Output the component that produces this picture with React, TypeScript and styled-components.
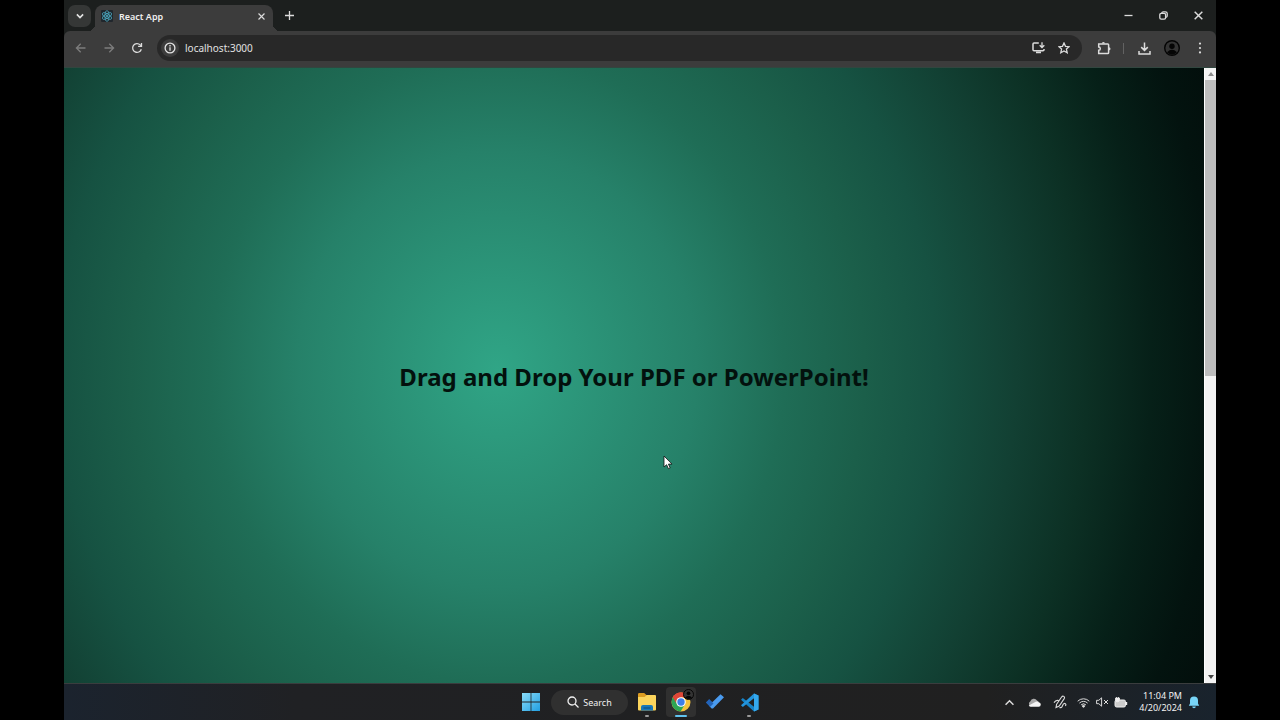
import React from 'react';
import styled, { createGlobalStyle } from 'styled-components';

const GlobalStyle = createGlobalStyle`
  * { box-sizing: border-box; }
  body { margin: 0; background: #000; font-family: "Noto Sans", "Open Sans", sans-serif; }
  button { font: inherit; color: inherit; border: 0; padding: 0; background: none; }
  h1 { margin: 0; }
  svg { display: block; flex: none; }
`;

const Screen = styled.div`
  width: 90%;
  height: 100vh;
  margin: 0 auto;
  display: flex;
  flex-direction: column;
  color: #e3e3e3;
  background: #1c1f1e;
  overflow: hidden;
`;

const TabStrip = styled.header`
  display: flex;
  align-items: stretch;
  height: 31px;
  flex: none;
  padding-left: 4px;
`;

const TabSearch = styled.button`
  display: grid;
  place-items: center;
  width: 23px;
  height: 22px;
  margin: 5px 4px 0 0;
  border-radius: 7px;
  background: #353736;
`;

const Tab = styled.div`
  position: relative;
  display: flex;
  align-items: center;
  gap: 6px;
  width: 178px;
  margin-top: 5px;
  padding: 0 6px 4px;
  border-radius: 8px 8px 0 0;
  background: #3c3c3c;
  font-size: 9px;
  font-weight: 600;
  color: #efefef;
  &::before, &::after {
    content: "";
    position: absolute;
    bottom: 0;
    width: 7px;
    height: 7px;
  }
  &::before { right: 100%; background: radial-gradient(circle at 0 0, transparent 7px, #3c3c3c 7px); }
  &::after { left: 100%; background: radial-gradient(circle at 100% 0, transparent 7px, #3c3c3c 7px); }
`;

const TabTitle = styled.span`flex: 1;`;

const IconButton = styled.button<{ $w?: number; $dim?: boolean }>`
  display: grid;
  place-items: center;
  width: ${(p) => p.$w ?? 16}px;
  height: 100%;
  flex: none;
  color: ${(p) => (p.$dim ? '#7c7c7c' : '#dcdcdc')};
`;

const WindowControls = styled.div`
  display: flex;
  margin-left: auto;
`;

const Toolbar = styled.nav`
  display: flex;
  align-items: center;
  height: 36px;
  flex: none;
  padding: 0 3px 2px;
  border-radius: 6px 6px 0 0;
  background: #3c3c3c;
`;

const AddressBar = styled.form`
  display: flex;
  align-items: center;
  flex: 1;
  height: 26px;
  margin: 0 8px 0 6px;
  padding: 0 6px 0 4px;
  border-radius: 13px;
  background: #282828;
`;

const SiteInfo = styled.button`
  display: grid;
  place-items: center;
  width: 18px;
  height: 18px;
  border-radius: 50%;
  background: #3c3c3c;
`;

const Address = styled.input`
  flex: 1;
  min-width: 0;
  height: 20px;
  margin-left: 6px;
  padding: 0;
  border: 0;
  outline: 0;
  background: none;
  color: #e0e0e0;
  font: 10px "Noto Sans", sans-serif;
`;

const Divider = styled.span`
  width: 1px;
  height: 11px;
  margin: 0 7px 0 5px;
  background: #626262;
`;

const Viewport = styled.div`
  display: flex;
  flex: 1;
  min-height: 0;
  border-top: 1px solid #31463f;
`;

const Page = styled.main`
  flex: 1;
  display: grid;
  place-items: center;
  padding-top: 2px;
  background: radial-gradient(70% 142% at 38% 49%, #30a586 0, #268169 25%, #1f6d56 36%, #1b5f4a 46%, #165242 55%, #124033 65%, #0c3024 74%, #062018 82%, #03130f 90%, #020b09 100%);
`;

const Headline = styled.h1`
  font: bold 24px/34px "Noto Sans", sans-serif;
  color: #03110d;
  text-align: center;
`;

const Scrollbar = styled.div`
  display: flex;
  flex-direction: column;
  align-items: center;
  width: 12px;
  background: #f3f3f3;
  border-left: 1px solid #fff;
`;

const ScrollArrow = styled.button`
  display: grid;
  place-items: center;
  width: 100%;
  height: 12px;
  color: #555;
`;

const ScrollTrack = styled.div`
  flex: 1;
  width: 100%;
`;

const ScrollThumb = styled.div`
  height: 50%;
  background: #bdbdbd;
`;

const Taskbar = styled.footer`
  display: grid;
  grid-template-columns: 1fr auto 1fr;
  height: 37px;
  flex: none;
  border-top: 1px solid #3a3d3e;
  background: linear-gradient(90deg, #1b232e 0, #202124 20%, #202020 80%, #19232d 100%);
`;

const Apps = styled.div`
  grid-column: 2;
  display: flex;
  align-items: center;
  gap: 4px;
`;

const AppButton = styled.button<{ $active?: boolean }>`
  position: relative;
  display: grid;
  place-items: center;
  width: 30px;
  height: 30px;
  border-radius: 4px;
  background: ${(p) => (p.$active ? '#303030' : 'none')};
`;

const Running = styled.span<{ $active?: boolean }>`
  position: absolute;
  bottom: 0;
  width: ${(p) => (p.$active ? 12 : 4)}px;
  height: 2px;
  border-radius: 1px;
  background: ${(p) => (p.$active ? '#61c3f0' : '#9a9a9a')};
`;

const SearchButton = styled.button`
  display: flex;
  align-items: center;
  justify-content: center;
  gap: 4px;
  width: 77px;
  height: 25px;
  margin-left: 1px;
  border-radius: 13px;
  background: #303030;
  font-size: 9px;
  color: #f0f0f0;
`;

const Tray = styled.div`
  display: flex;
  align-items: center;
  justify-content: flex-end;
  padding-right: 16px;
`;

const Clock = styled.time`
  margin: 0 6px 0 7px;
  text-align: right;
  font-size: 9px;
  line-height: 12px;
  color: #f2f2f2;
`;

const Cursor = styled.svg`
  position: fixed;
  left: 663px;
  top: 455px;
`;

const stroke = { fill: 'none', stroke: 'currentColor', strokeWidth: 1.3 } as const;

const Chevron = ({ up = false, size = 10 }: { up?: boolean; size?: number }) => (
  <svg width={size} height={size} viewBox="0 0 8 8" {...stroke}><path d={up ? 'M0.5 6 4 2.5 7.5 6' : 'M1.5 2.7 4 5.2 6.5 2.7'} /></svg>
);

const ReactLogo = () => (
  <svg width="12" height="12" viewBox="0 0 12 12">
    <rect width="12" height="12" rx="1" fill="#20262c" />
    <g fill="none" stroke="#4fb6cf" strokeWidth="0.7">
      {[30, 90, 150].map((a) => <ellipse key={a} cx="6" cy="6" rx="5.3" ry="2.1" transform={`rotate(${a} 6 6)`} />)}
    </g>
    <circle cx="6" cy="6" r="1" fill="#4fb6cf" />
  </svg>
);

const Cross = ({ size = 7 }: { size?: number }) => (
  <svg width={size} height={size} viewBox="0 0 8 8" {...stroke}><path d="M.6.6 7.4 7.4M7.4.6.6 7.4" /></svg>
);

const Arrow = ({ right = false }: { right?: boolean }) => (
  <svg width="12" height="12" viewBox="0 0 12 12" {...stroke}>
    <path d={right ? 'M1.5 6h9M6.3 1.7 10.6 6 6.3 10.3' : 'M10.5 6h-9M5.7 1.7 1.4 6l4.3 4.3'} />
  </svg>
);

const ChromeLogo = () => (
  <svg width="20" height="20" viewBox="0 0 20 20">
    <circle cx="10" cy="10" r="9.5" fill="#f5c33b" />
    <path d="M10 10 1.8 5.2A9.5 9.5 0 0 1 18.2 5.3L10 5.3Z" fill="#df4638" />
    <path d="M10 10 1.8 5.2A9.5 9.5 0 0 0 9.6 19.5L14 12.3Z" fill="#2da654" />
    <path d="M1.8 5.2A9.5 9.5 0 0 1 18.2 5.3H10A4.7 4.7 0 0 0 5.9 12.3Z" fill="#df4638" />
    <circle cx="10" cy="10" r="4.8" fill="#fff" />
    <circle cx="10" cy="10" r="3.7" fill="#3d7fe8" />
  </svg>
);

const ProfileBadge = styled.svg`
  position: absolute;
  top: 2px;
  right: 2px;
`;

const Person = () => (
  <>
    <circle cx="8" cy="8" r="7.3" fill="#343434" stroke="#050505" strokeWidth="1.4" />
    <circle cx="8" cy="6.2" r="2.7" fill="#050505" />
    <path d="M3 12.2Q8 7.4 13 12.2 8 17 3 12.2" fill="#050505" />
  </>
);

export default function App() {
  return (
    <Screen>
      <GlobalStyle />
      <TabStrip>
        <TabSearch aria-label="Search tabs"><Chevron /></TabSearch>
        <Tab>
          <ReactLogo />
          <TabTitle>React App</TabTitle>
          <IconButton aria-label="Close tab" $w={12}><Cross /></IconButton>
        </Tab>
        <IconButton aria-label="New tab" $w={32}>
          <svg width="9" height="9" viewBox="0 0 9 9" {...stroke}><path d="M4.5 0v9M0 4.5h9" /></svg>
        </IconButton>
        <WindowControls>
          <IconButton aria-label="Minimize" $w={35}>
            <svg width="9" height="9" viewBox="0 0 9 9" {...stroke}><path d="M.5 4.5h8" /></svg>
          </IconButton>
          <IconButton aria-label="Restore" $w={35}>
            <svg width="9" height="9" viewBox="0 0 9 9" {...stroke}>
              <rect x="0.8" y="2.4" width="5.8" height="5.8" rx="1.4" /><path d="M2.6 1.9Q3 .8 4.2.8h2.2Q8.2.8 8.2 2.6v2.2Q8.2 6 7.2 6.4" />
            </svg>
          </IconButton>
          <IconButton aria-label="Close" $w={35}><Cross size={9} /></IconButton>
        </WindowControls>
      </TabStrip>

      <Toolbar>
        <IconButton aria-label="Back" $w={28} $dim><Arrow /></IconButton>
        <IconButton aria-label="Forward" $w={28} $dim><Arrow right /></IconButton>
        <IconButton aria-label="Reload" $w={28}>
          <svg width="12" height="12" viewBox="0 0 12 12" {...stroke}>
            <path d="M10.3 7.2A4.4 4.4 0 1 1 9.2 2.9L10.3 4" /><path d="M10.5 1v3.4H7.1" />
          </svg>
        </IconButton>
        <AddressBar>
          <SiteInfo type="button" aria-label="Site information">
            <svg width="12" height="12" viewBox="0 0 12 12" {...stroke}>
              <circle cx="6" cy="6" r="4.9" /><path d="M6 5.3v3.4M6 3.1v1.3" />
            </svg>
          </SiteInfo>
          <Address aria-label="Address" defaultValue="localhost:3000" />
          <IconButton type="button" aria-label="Install app" $w={25}>
            <svg width="13" height="12" viewBox="0 0 13 12" {...stroke}>
              <path d="M6.8 1H2Q1 1 1 2v5.7q0 1 1 1h9q1 0 1-1V7M4 10.5h5" strokeWidth="1.5" /><path d="M10 .3v5M7.7 3.2 10 5.5l2.3-2.3" />
            </svg>
          </IconButton>
          <IconButton type="button" aria-label="Bookmark" $w={25}>
            <svg width="12" height="12" viewBox="0 0 12 12" {...stroke}>
              <path d="m6 1 1.5 3.3 3.6.4-2.7 2.4.8 3.6L6 8.9l-3.2 1.8.8-3.6L.9 4.7l3.6-.4Z" />
            </svg>
          </IconButton>
        </AddressBar>
        <IconButton aria-label="Extensions" $w={28}>
          <svg width="14" height="14" viewBox="0 0 14 14" {...stroke} strokeWidth={1.5}>
            <path d="M1.7 2.9h9.1q.8 0 .8.8v8q0 .8-.8.8H1.7V9.3a1.6 1.6 0 0 0 0-3.2Z" />
            <path d="M4.8 2.6a1.6 1.6 0 0 1 3.2 0ZM12 6.2a1.5 1.5 0 0 1 0 3Z" fill="currentColor" stroke="none" />
          </svg>
        </IconButton>
        <Divider />
        <IconButton aria-label="Downloads" $w={26}>
          <svg width="13" height="13" viewBox="0 0 13 13" {...stroke} strokeWidth={1.5}>
            <path d="M6.5.5v7.7M3.2 5.1l3.3 3.3 3.3-3.3M1 9v3h11V9" />
          </svg>
        </IconButton>
        <IconButton aria-label="Profile" $w={30}>
          <svg width="16" height="16" viewBox="0 0 16 16"><Person /></svg>
        </IconButton>
        <IconButton aria-label="Menu" $w={26}>
          <svg width="4" height="12" viewBox="0 0 4 12" fill="currentColor">
            <circle cx="2" cy="1.6" r="1.1" /><circle cx="2" cy="6" r="1.1" /><circle cx="2" cy="10.4" r="1.1" />
          </svg>
        </IconButton>
      </Toolbar>

      <Viewport>
        <Page><Headline>Drag and Drop Your PDF or PowerPoint!</Headline></Page>
        <Scrollbar>
          <ScrollArrow aria-label="Scroll up"><svg width="6" height="4" viewBox="0 0 6 4"><path d="M0 4 3 0l3 4Z" fill="#8b8b8b" /></svg></ScrollArrow>
          <ScrollTrack><ScrollThumb /></ScrollTrack>
          <ScrollArrow aria-label="Scroll down"><svg width="6" height="4" viewBox="0 0 6 4"><path d="M0 0 3 4l3-4Z" fill="#444" /></svg></ScrollArrow>
        </Scrollbar>
      </Viewport>

      <Taskbar>
        <Apps>
          <AppButton aria-label="Start">
            <svg width="18" height="18" viewBox="0 0 18 18">
              <defs><linearGradient id="win" x2="1" y2="1"><stop stopColor="#8adcf8" /><stop offset="1" stopColor="#219fe2" /></linearGradient></defs>
              <path d="M0 0h8.6v8.6H0ZM9.4 0H18v8.6H9.4ZM0 9.4h8.6V18H0ZM9.4 9.4H18V18H9.4Z" fill="url(#win)" />
            </svg>
          </AppButton>
          <SearchButton>
            <svg width="12" height="12" viewBox="0 0 12 12" {...stroke}><circle cx="5" cy="5" r="4" /><path d="m8 8 3.5 3.5" /></svg>
            Search
          </SearchButton>
          <AppButton aria-label="File Explorer">
            <svg width="20" height="18" viewBox="0 0 20 18">
              <path d="M1 1.2Q1 0 2.2 0h5l2.2 2H10v4H1Z" fill="#dc9c22" />
              <path d="M1 4h6.6l2.3-2H18q1 0 1 1v13.5q0 1-1 1H2q-1 0-1-1Z" fill="#fbd45c" />
              <path d="M4 17.5V14q0-2 2-2h8q2 0 2 2v3.5Z" fill="#1877b8" /><path d="M6.5 15h7" stroke="#0d4f86" strokeWidth="1.2" />
            </svg>
            <Running />
          </AppButton>
          <AppButton aria-label="Chrome" $active>
            <ChromeLogo />
            <ProfileBadge width="11" height="11" viewBox="0 0 16 16"><Person /></ProfileBadge>
            <Running $active />
          </AppButton>
          <AppButton aria-label="To Do">
            <svg width="20" height="18" viewBox="0 0 20 18">
              <path d="m1 9.5 3.2-3.2 5.8 5.8-3.2 3.4Z" fill="#2263b8" /><path d="M6.8 15.5 3.9 12.5 15.5 1.2 19 4.3 8 15.5Z" fill="#4a9bef" />
              <path d="m1 9.5 3.2-3.2 4.3 4.2-3.3 3.3Z" fill="#2263b8" />
            </svg>
          </AppButton>
          <AppButton aria-label="Visual Studio Code">
            <svg width="19" height="19" viewBox="0 0 19 19">
              <path d="M14 .5 18.5 2.6v13.8L14 18.5 1 6.8l1.8-1.7L14 13.7Z" fill="#1683c7" />
              <path d="M14 .5v4.8L2.8 13.9 1 12.2Z" fill="#2394dc" /><path d="M14 .5 18.5 2.6v13.8L14 18.5Z" fill="#35a9ee" />
            </svg>
            <Running />
          </AppButton>
        </Apps>
        <Tray>
          <IconButton aria-label="Hidden icons" $w={25}><Chevron up size={9} /></IconButton>
          <IconButton aria-label="OneDrive" $w={25}>
            <svg width="13" height="9" viewBox="0 0 13 9">
              <path d="M3 8.5A2.8 2.8 0 0 1 2.4 3.3 3.7 3.7 0 0 1 9 2.4L11 4Z" fill="#aaa" /><path d="M3 8.7Q1.4 8.6.8 7.4L7.8 3.7Q9.5 3 10.7 4.2 12.8 4.6 12.8 6.5 12.7 8.7 10.7 8.7Z" fill="#f4f4f4" />
            </svg>
          </IconButton>
          <IconButton aria-label="Pen menu" $w={25}>
            <svg width="14" height="14" viewBox="0 0 14 14" {...stroke} strokeWidth={1.1}>
              <path d="M3.6 9.2 8.6 2q1-1.4 2.2-.6t.4 2.2l-5 7.4-3.2 1.6ZM1 7.6q2-3 4.6-2M6.5 12.4q1.6.8 2.6-.8l1-2.2q1-1.6 2.2-.7t0 2.3" />
            </svg>
          </IconButton>
          <IconButton aria-label="Wi-Fi" $w={22}>
            <svg width="13" height="11" viewBox="0 0 13 11" {...stroke} strokeWidth={1}>
              <path d="M.7 4.2a8.2 8.2 0 0 1 11.6 0M2.4 6.1a5.8 5.8 0 0 1 8.2 0M4.1 7.9a3.4 3.4 0 0 1 4.8 0" /><circle cx="6.5" cy="9.2" r="1" fill="currentColor" />
            </svg>
          </IconButton>
          <IconButton aria-label="Muted" $w={16}>
            <svg width="13" height="10" viewBox="0 0 13 10" {...stroke} strokeWidth={1}>
              <path d="M.6 3.3h2.2L5.6.8v8.4L2.8 6.7H.6ZM8 3l4 4M12 3 8 7" />
            </svg>
          </IconButton>
          <IconButton aria-label="Battery" $w={22}>
            <svg width="14" height="11" viewBox="0 0 14 11">
              <rect x="1" y="3" width="10.5" height="7" rx="1.6" fill="#ccc" stroke="#eee" /><path d="M12.5 5v3" stroke="#eee" strokeWidth="1.4" />
              <path d="M1.5 1h4v2.2q0 1.6-2 1.6t-2-1.6ZM2.5 0v1M4.5 0v1" fill="#eee" stroke="#eee" strokeWidth=".8" />
            </svg>
          </IconButton>
          <Clock>11:04 PM<br />4/20/2024</Clock>
          <IconButton aria-label="Notifications" $w={12}>
            <svg width="12" height="13" viewBox="0 0 12 13" fill="#78d5f8">
              <path d="M6 .5a4 4 0 0 1 4 4v3l1.2 2.2H.8L2 7.5v-3a4 4 0 0 1 4-4ZM4.2 10.5h3.6a1.8 1.8 0 0 1-3.6 0Z" />
            </svg>
          </IconButton>
        </Tray>
      </Taskbar>
      <Cursor width="10" height="15" viewBox="0 0 10 15">
        <path d="M1 1v11l2.6-2.3 1.8 4 1.8-.8-1.8-3.8H9Z" fill="#fff" stroke="#111" strokeWidth=".8" />
      </Cursor>
    </Screen>
  );
}
